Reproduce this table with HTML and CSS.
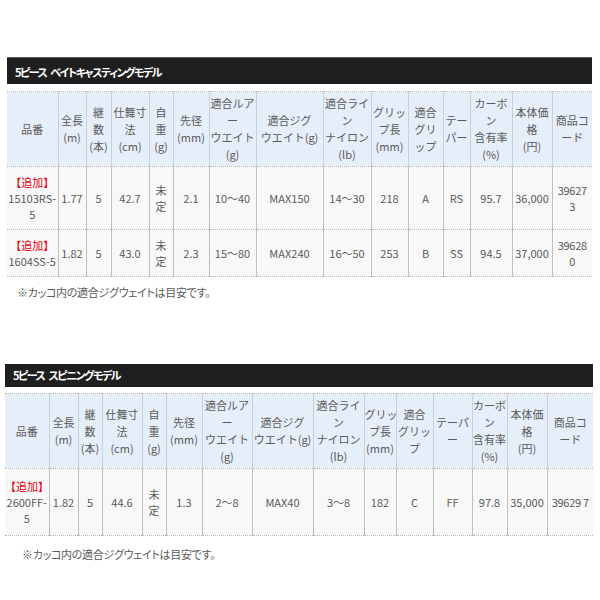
FILE: index.html
```html
<!DOCTYPE html>
<html lang="ja">
<head>
<meta charset="utf-8">
<title>5ピース モデル</title>
<link rel="stylesheet" href="styles.css">
</head>
<body>
<section class="block block-1">
  <h2 class="bar bar-1">5ピース ベイトキャスティングモデル</h2>
  <table class="spec t1">
    <colgroup>
      <col><col><col><col><col><col><col><col><col><col><col><col><col><col><col>
    </colgroup>
    <thead>
      <tr>
        <th>品番</th>
        <th>全長<br>(m)</th>
        <th>継<br>数<br>(本)</th>
        <th>仕舞寸<br>法<br>(cm)</th>
        <th>自<br>重<br>(g)</th>
        <th>先径<br>(mm)</th>
        <th>適合ルア<br>ー<br>ウエイト<br>(g)</th>
        <th>適合ジグ<br>ウエイト(g)</th>
        <th>適合ライ<br>ン<br>ナイロン<br>(lb)</th>
        <th>グリッ<br>プ長<br>(mm)</th>
        <th>適合<br>グリ<br>ップ</th>
        <th>テー<br>パー</th>
        <th>カーボ<br>ン<br>含有率<br>(%)</th>
        <th>本体価<br>格<br>(円)</th>
        <th>商品コ<br>ード</th>
      </tr>
    </thead>
    <tbody>
      <tr>
        <td><span class="new">【追加】</span><br>15103RS-<br>5</td>
        <td>1.77</td>
        <td>5</td>
        <td>42.7</td>
        <td>未<br>定</td>
        <td>2.1</td>
        <td>10～40</td>
        <td>MAX150</td>
        <td>14～30</td>
        <td>218</td>
        <td>A</td>
        <td>RS</td>
        <td>95.7</td>
        <td>36,000</td>
        <td class="code">39627<br>3</td>
      </tr>
      <tr>
        <td><span class="new">【追加】</span><br>1604SS-5</td>
        <td>1.82</td>
        <td>5</td>
        <td>43.0</td>
        <td>未<br>定</td>
        <td>2.3</td>
        <td>15～80</td>
        <td>MAX240</td>
        <td>16～50</td>
        <td>253</td>
        <td>B</td>
        <td>SS</td>
        <td>94.5</td>
        <td>37,000</td>
        <td class="code">39628<br>0</td>
      </tr>
    </tbody>
  </table>
  <p class="note note-1">※カッコ内の適合ジグウェイトは目安です。</p>
</section>

<section class="block block-2">
  <h2 class="bar">5ピース スピニングモデル</h2>
  <table class="spec t2">
    <colgroup>
      <col><col><col><col><col><col><col><col><col><col><col><col><col><col><col>
    </colgroup>
    <thead>
      <tr>
        <th>品番</th>
        <th>全長<br>(m)</th>
        <th>継<br>数<br>(本)</th>
        <th>仕舞寸<br>法<br>(cm)</th>
        <th>自<br>重<br>(g)</th>
        <th>先径<br>(mm)</th>
        <th>適合ルア<br>ー<br>ウエイト<br>(g)</th>
        <th>適合ジグ<br>ウエイト(g)</th>
        <th>適合ライ<br>ン<br>ナイロン<br>(lb)</th>
        <th>グリッ<br>プ長<br>(mm)</th>
        <th>適合<br>グリッ<br>プ</th>
        <th>テーパ<br>ー</th>
        <th>カーボ<br>ン<br>含有率<br>(%)</th>
        <th>本体価<br>格<br>(円)</th>
        <th>商品コ<br>ード</th>
      </tr>
    </thead>
    <tbody>
      <tr class="tall">
        <td><span class="new">【追加】</span><br>2600FF-<br>5</td>
        <td>1.82</td>
        <td>5</td>
        <td>44.6</td>
        <td>未<br>定</td>
        <td>1.3</td>
        <td>2～8</td>
        <td>MAX40</td>
        <td>3～8</td>
        <td>182</td>
        <td>C</td>
        <td>FF</td>
        <td>97.8</td>
        <td>35,000</td>
        <td class="code">39629 7</td>
      </tr>
    </tbody>
  </table>
  <p class="note note-2">※カッコ内の適合ジグウェイトは目安です。</p>
</section>
</body>
</html>
```

FILE: styles.css
```css
html, body {
  margin: 0;
  padding: 0;
  background: #ffffff;
}

body {
  font-family: "Noto Sans CJK JP", "Noto Sans", sans-serif;
  font-size: 11px;
  color: #5a5a5a;
}

.block-1 {
  margin: 57px 0 0 7px;
  width: 585px;
}

.block-2 {
  margin: 64px 0 0 5px;
  width: 588px;
}

.bar {
  margin: 0;
  height: 23px;
  line-height: 23px;
  padding-left: 8px;
  background: #1f1f1f;
  color: #ffffff;
  font-size: 11px;
  font-weight: bold;
  font-feature-settings: "palt";
  letter-spacing: -1.5px;
  word-spacing: 3px;
}

.bar-1 {
  height: 26px;
  line-height: 28px;
  border-top: 1px solid #5a5a5a;
}

.spec {
  width: 100%;
  table-layout: fixed;
  border-collapse: collapse;
  margin-top: 7px;
}

.t2 {
  margin-top: 6px;
}

.spec th,
.spec td {
  text-align: center;
  vertical-align: middle;
  white-space: nowrap;
  overflow: hidden;
  font-weight: normal;
  padding: 0;
}

.spec th {
  background: #e6eef9;
  line-height: 17px;
  padding: 3px 0;
  border-top: 1px dotted #b5b5b5;
  border-bottom: 1px dotted #b5b5b5;
}

.spec td {
  background: #f8f8f8;
  line-height: 16px;
  padding: 7px 0;
  border-bottom: 1px dotted #b5b5b5;
  color: #5a5a5a;
}

.spec th + th {
  border-left: 1px solid #c9d0da;
}

.spec td + td {
  border-left: 1px solid #bdbdbd;
}

.spec .tall td {
  padding: 9px 0;
}

.new {
  color: #e60012;
}

.code {
  letter-spacing: -0.3px;
}

/* column widths: table 1 */
.t1 col:nth-child(1) { width: 51px; }
.t1 col:nth-child(2) { width: 28px; }
.t1 col:nth-child(3) { width: 25px; }
.t1 col:nth-child(4) { width: 38px; }
.t1 col:nth-child(5) { width: 24px; }
.t1 col:nth-child(6) { width: 36px; }
.t1 col:nth-child(7) { width: 47px; }
.t1 col:nth-child(8) { width: 67px; }
.t1 col:nth-child(9) { width: 48px; }
.t1 col:nth-child(10) { width: 37px; }
.t1 col:nth-child(11) { width: 35px; }
.t1 col:nth-child(12) { width: 27px; }
.t1 col:nth-child(13) { width: 42px; }
.t1 col:nth-child(14) { width: 40px; }
.t1 col:nth-child(15) { width: 40px; }

/* column widths: table 2 */
.t2 col:nth-child(1) { width: 44px; }
.t2 col:nth-child(2) { width: 29px; }
.t2 col:nth-child(3) { width: 24px; }
.t2 col:nth-child(4) { width: 40px; }
.t2 col:nth-child(5) { width: 24px; }
.t2 col:nth-child(6) { width: 36px; }
.t2 col:nth-child(7) { width: 50px; }
.t2 col:nth-child(8) { width: 61px; }
.t2 col:nth-child(9) { width: 51px; }
.t2 col:nth-child(10) { width: 32px; }
.t2 col:nth-child(11) { width: 37px; }
.t2 col:nth-child(12) { width: 39px; }
.t2 col:nth-child(13) { width: 35px; }
.t2 col:nth-child(14) { width: 40px; }
.t2 col:nth-child(15) { width: 46px; }

.note {
  margin: 0;
  font-size: 11px;
  line-height: 16px;
  color: #5a5a5a;
  font-feature-settings: "palt";
  letter-spacing: -0.3px;
}

.note-1 {
  padding: 7px 0 0 10px;
}

.note-2 {
  padding: 10px 0 0 17px;
}
```
